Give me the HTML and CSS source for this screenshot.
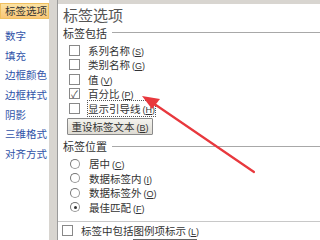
FILE: index.html
```html
<!DOCTYPE html>
<html lang="zh">
<head>
    <meta charset="UTF-8">
    <title>设置数据标签格式</title>
    <link rel="stylesheet" href="styles.css">
</head>
<body>
    <div class="dialog">
        <ul class="sidebar">
            <li class="active">标签选项</li>
            <li>数字</li>
            <li>填充</li>
            <li>边框颜色</li>
            <li>边框样式</li>
            <li>阴影</li>
            <li>三维格式</li>
            <li>对齐方式</li>
        </ul>
        <div class="gutter"></div>
        <div class="panel">
            <h1>标签选项</h1>
            <div class="group-title"><span>标签包括</span></div>
            <div class="opts">
                <label class="opt"><span class="box"></span><span>系列名称<span class="key">(<u>S</u>)</span></span></label>
                <label class="opt"><span class="box"></span><span>类别名称<span class="key">(<u>G</u>)</span></span></label>
                <label class="opt"><span class="box"></span><span>值<span class="key">(<u>V</u>)</span></span></label>
                <label class="opt"><span class="box checked">✓</span><span>百分比<span class="key">(<u>P</u>)</span></span></label>
                <label class="opt"><span class="box"></span><span class="focus">显示引导线<span class="key">(<u>H</u>)</span></span></label>
            </div>
            <button class="reset">重设标签文本<span class="key">(<u>B</u>)</span></button>
            <div class="group-title"><span>标签位置</span></div>
            <div class="opts">
                <label class="opt"><span class="radio"></span><span>居中<span class="key">(<u>C</u>)</span></span></label>
                <label class="opt"><span class="radio"></span><span>数据标签内<span class="key">(<u>I</u>)</span></span></label>
                <label class="opt"><span class="radio"></span><span>数据标签外<span class="key">(<u>O</u>)</span></span></label>
                <label class="opt"><span class="radio on"></span><span>最佳匹配<span class="key">(<u>F</u>)</span></span></label>
            </div>
            <div class="sep"></div>
            <label class="opt legend"><span class="box"></span><span>标签中包括图例项标示<span class="key">(<u>L</u>)</span></span></label>
            <div class="field"></div>
        </div>
        <svg class="arrow" width="320" height="240" viewBox="0 0 320 240">
            <line x1="254" y1="172" x2="150" y2="101" stroke="#e8383d" stroke-width="2.2" stroke-linecap="round"/>
            <polygon points="142,96 160,99 152,109" fill="#e8383d"/>
        </svg>
    </div>
</body>
</html>
```

FILE: styles.css
```css
body {
    margin: 0;
    width: 320px;
    height: 240px;
    overflow: hidden;
    font-family: "Noto Sans CJK SC", "Liberation Sans", sans-serif;
    font-size: 11px;
    color: #333;
    background: #fff;
}
.dialog {
    position: relative;
    display: flex;
    height: 240px;
}
.sidebar {
    list-style: none;
    margin: 0;
    padding: 3px 0 0 0;
    width: 49px;
    flex-shrink: 0;
    background: #fff;
}
.sidebar li {
    height: 19.7px;
    line-height: 17px;
    padding-left: 5px;
    color: #2f52a8;
    white-space: nowrap;
    font-size: 10.5px;
}
.sidebar li.active {
    height: 16px;
    margin-bottom: 8px;
    color: #333;
    background: linear-gradient(#fbe3a4, #f9c677);
    border: 1px solid #f0c060;
    box-sizing: border-box;
    padding-left: 4px;
    line-height: 14px;
}
.gutter {
    width: 8px;
    flex-shrink: 0;
    background: #d8d5d0;
    border-right: 1px solid #9a9a9a;
}
.panel {
    flex: 1;
    background: #fff;
    border-top: 4px solid #d8d5d0;
    padding: 0 0 0 5px;
}
h1 {
    margin: 0;
    font-size: 15px;
    font-weight: normal;
    color: #555;
    line-height: 20px;
    padding-top: 1px;
}
.group-title {
    display: flex;
    align-items: center;
    gap: 5px;
    height: 15px;
}
.group-title::after {
    content: "";
    flex: 1;
    border-top: 1px solid #a8a8a8;
}
.opts {
    display: flex;
    flex-direction: column;
    padding: 3px 0 0 6px;
}
.opt {
    display: flex;
    align-items: center;
    gap: 8px;
    height: 14.5px;
    font-size: 10.5px;
    white-space: nowrap;
}
.key {
    font-family: "Liberation Sans", sans-serif;
    font-size: 9px;
    margin-left: 2px;
}
.box {
    width: 9px;
    height: 9px;
    border: 1px solid #888;
    background: #fff;
    font-size: 10px;
    line-height: 9px;
    text-align: center;
    color: #444;
    flex-shrink: 0;
}
.radio {
    width: 8px;
    height: 8px;
    border: 1px solid #999;
    border-top-color: #777;
    border-left-color: #777;
    border-radius: 50%;
    margin: 0 1px;
    position: relative;
    flex-shrink: 0;
}
.radio.on::after {
    content: "";
    position: absolute;
    left: 2.5px;
    top: 2.5px;
    width: 3px;
    height: 3px;
    border-radius: 50%;
    background: #333;
}
.focus {
    outline: 1px dotted #555;
}
.reset {
    display: block;
    margin: 2px 0 0 4px;
    width: 86px;
    height: 17px;
    padding: 0;
    font-family: inherit;
    font-size: 10.5px;
    color: #333;
    background: linear-gradient(#f4f3ee, #dedbd3);
    border: 1px solid #8a8a8a;
    border-radius: 1px;
}
.reset + .group-title {
    margin-top: 4px;
}
.sep {
    border-top: 1px solid #c8c8c8;
    margin: 6px 0 2px -5px;
}
.legend {
    padding-left: 0;
    margin-left: -1px;
}
.field {
    margin: 1px 0 0 70px;
    width: 64px;
    border-top: 1px solid #666;
}
.arrow {
    position: absolute;
    left: 0;
    top: 0;
    pointer-events: none;
}
```
